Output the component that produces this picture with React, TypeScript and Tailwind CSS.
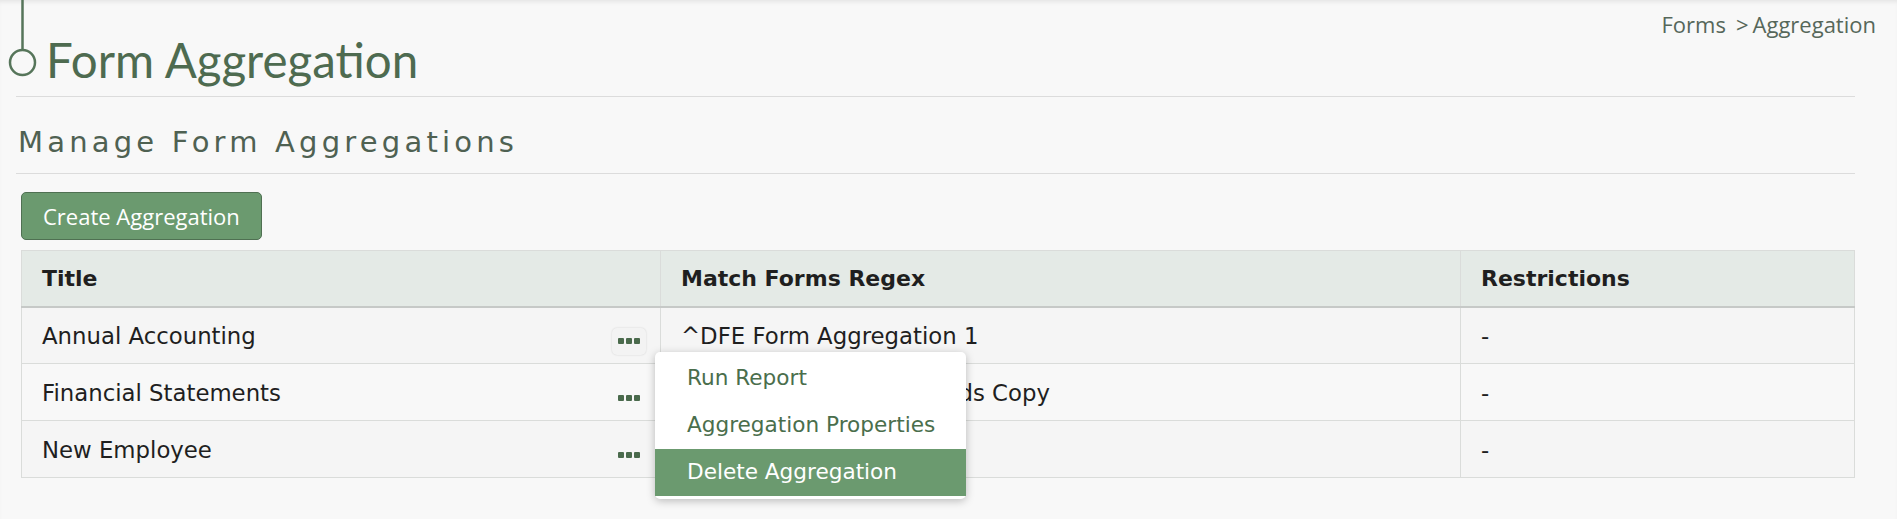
import React from 'react';

interface Aggregation {
  title: string;
  regex: string;
  restrictions: string;
}

const AGGREGATIONS: Aggregation[] = [
  { title: 'Annual Accounting', regex: '^DFE Form Aggregation 1', restrictions: '-' },
  { title: 'Financial Statements', regex: '^DFE Accounting  Records Copy', restrictions: '-' },
  { title: 'New Employee', regex: '^DFE New Employee', restrictions: '-' },
];

const MENU_ITEMS = ['Run Report', 'Aggregation Properties', 'Delete Aggregation'];

const DotsIcon: React.FC = () => (
  <svg width="22" height="6" viewBox="0 0 22 6" fill="#4a6a4c">
    <rect x="0" y="0" width="6" height="6" rx="1" />
    <rect x="8" y="0" width="6" height="6" rx="1" />
    <rect x="16" y="0" width="6" height="6" rx="1" />
  </svg>
);

const RowMenu: React.FC = () => (
  <div className="absolute left-[43px] top-[24px] z-10 w-[311px] rounded-[5px] bg-white pt-[3px] pb-[3px] shadow-[0_2px_8px_rgba(0,0,0,0.25)]">
    {MENU_ITEMS.map((label, i) => (
      <div
        key={label}
        className={`flex h-[47px] items-center pl-[32px] text-[21.6px] ${
          i === MENU_ITEMS.length - 1 ? 'bg-[#6b9a6f] text-white' : 'text-[#4a6e4c]'
        }`}
      >
        {label}
      </div>
    ))}
  </div>
);

export default function App() {
  const openRow = 0;

  return (
    <div className="min-h-[519px] bg-[#f8f8f8] font-['DejaVu_Sans',sans-serif] shadow-[inset_0_4px_4px_-2px_rgba(0,0,0,0.08)]">
      <div className="pl-[16px] pr-[42px]">
        {/* Page title with timeline marker */}
        <div className="flex items-start justify-between">
          <div className="flex items-start">
            <svg width="40" height="80" viewBox="0 0 40 80" className="-ml-[16px] shrink-0">
              <line x1="22.5" y1="0" x2="22.5" y2="49" stroke="#56755a" strokeWidth="2.5" />
              <circle cx="22.5" cy="62.5" r="12.5" fill="none" stroke="#56755a" strokeWidth="2.5" />
            </svg>
            <h1 className="mt-[30px] ml-[6px] font-['Lato',sans-serif] text-[47.5px] leading-[60px] text-[#4e6b50]">
              Form Aggregation
            </h1>
          </div>
          <div className="mt-[10px] mr-[-21px] flex items-center font-['Open_Sans',sans-serif] text-[22px] leading-[28px] text-[#56675a]">
            <span>Forms</span>
            <span className="ml-[10px]">&gt;</span>
            <span className="ml-[4px]">Aggregation</span>
          </div>
        </div>
        <div className="mt-[6px] h-px bg-[#dcdcdc]" />

        {/* Section heading */}
        <h2 className="mt-[25px] ml-[2px] text-[29px] leading-[40px] tracking-[4.2px] text-[#4f6152]">
          Manage Form Aggregations
        </h2>
        <div className="mt-[11px] h-px bg-[#dcdcdc]" />

        <div className="pl-[5px]">
          <button className="mt-[18px] h-[48px] rounded-[5px] border border-[#4f7052] bg-[#6b9a6f] px-[21px] font-['Open_Sans',sans-serif] text-[22px] text-white">
            Create Aggregation
          </button>

          <table className="mt-[10px] w-full table-fixed border-collapse text-[22.8px] text-[#1f1f1f]">
            <colgroup>
              <col className="w-[639px]" />
              <col className="w-[800px]" />
              <col />
            </colgroup>
            <thead>
              <tr className="h-[56px] bg-[#e4eae6]">
                <th className="border border-b-2 border-[#dadcda] border-b-[#c6c9c7] pl-[20px] text-left text-[22px] font-bold">
                  Title
                </th>
                <th className="border border-b-2 border-[#dadcda] border-b-[#c6c9c7] pl-[20px] text-left text-[22px] font-bold">
                  Match Forms Regex
                </th>
                <th className="border border-b-2 border-[#dadcda] border-b-[#c6c9c7] pl-[20px] text-left text-[22px] font-bold">
                  Restrictions
                </th>
              </tr>
            </thead>
            <tbody>
              {AGGREGATIONS.map((row, i) => (
                <tr key={row.title} className={`h-[57px] ${i % 2 === 0 ? 'bg-[#f5f5f5]' : 'bg-[#f8f8f8]'}`}>
                  <td className="border border-[#dadcda] pt-[2px] pl-[20px] pr-[14px]">
                    <div className="flex items-center justify-between">
                      <span>{row.title}</span>
                      <span className="relative mt-[10px]">
                        <span
                          className={`flex h-[27px] w-[34px] items-center justify-center rounded-[5px] ${
                            i === openRow ? 'bg-[#f3f3f3] shadow-[0_0_2px_rgba(0,0,0,0.15)]' : ''
                          }`}
                        >
                          <DotsIcon />
                        </span>
                        {i === openRow && <RowMenu />}
                      </span>
                    </div>
                  </td>
                  <td className="whitespace-pre border border-[#dadcda] pt-[2px] pl-[20px]">{row.regex}</td>
                  <td className="border border-[#dadcda] pt-[2px] pl-[20px]">{row.restrictions}</td>
                </tr>
              ))}
            </tbody>
          </table>
        </div>
      </div>
    </div>
  );
}
